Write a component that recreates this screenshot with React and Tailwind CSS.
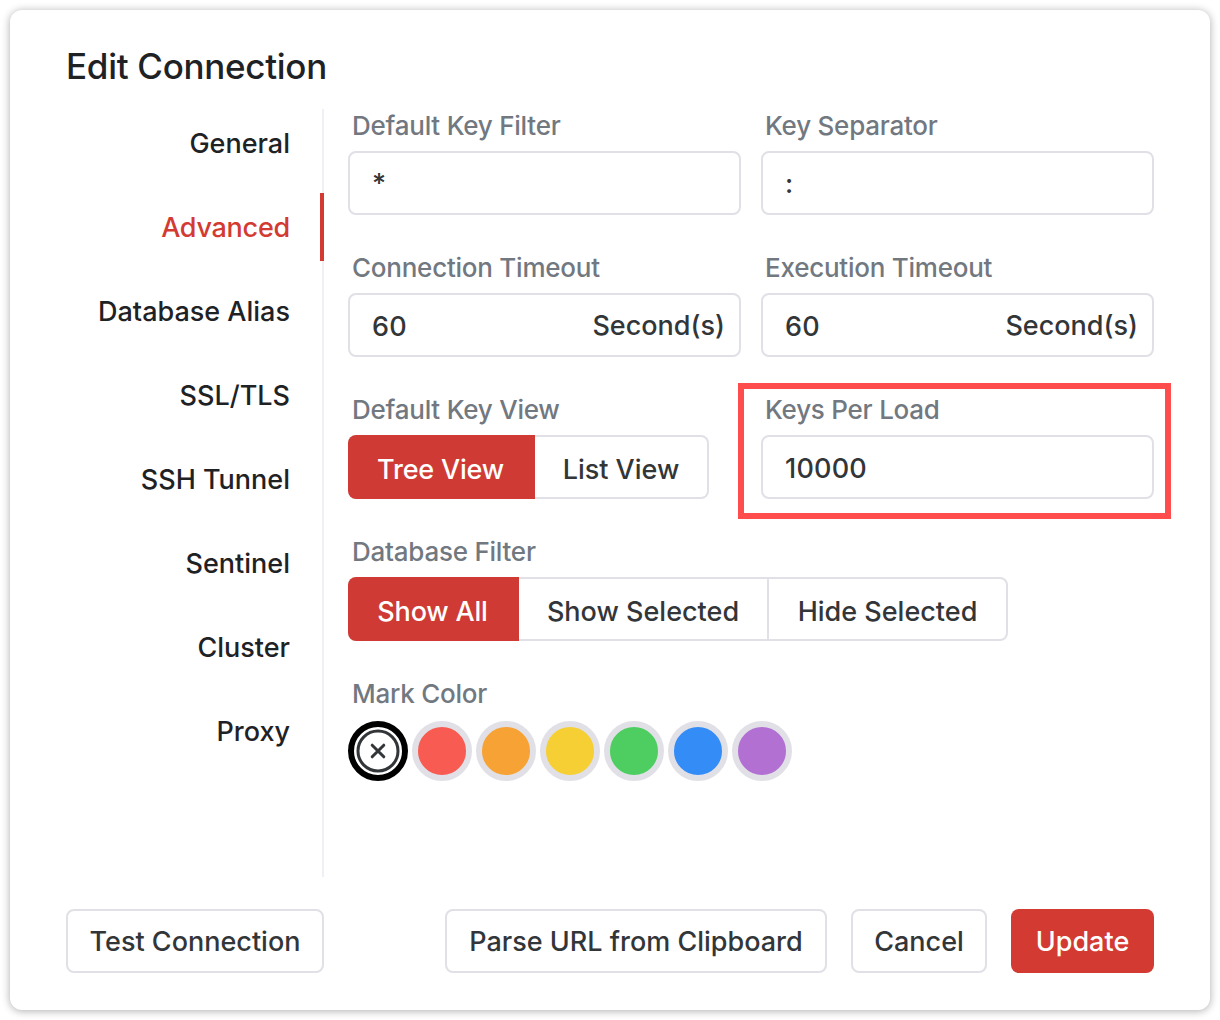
import React, { useState } from 'react';

const tabs = [
  'General',
  'Advanced',
  'Database Alias',
  'SSL/TLS',
  'SSH Tunnel',
  'Sentinel',
  'Cluster',
  'Proxy',
];

const markColors = ['#f75b52', '#f7a234', '#f5cf33', '#4ece60', '#348cf7', '#b270d3'];

const Field = ({ label, children }) => (
  <div className="h-[142px]">
    <div className="h-[51px] pl-1 text-[26px] leading-[52px] font-[450] tracking-[-0.24px] text-[#727880]">{label}</div>
    {children}
  </div>
);

const TextInput = ({ value, suffix, numeric, onChange }) => (
  <div className="flex h-16 items-center rounded-lg border-2 border-[#e0e0e6] pt-0.5 pr-[14px] pl-[22px]">
    <input
      value={value}
      onChange={(e) => onChange(e.target.value)}
      className={`min-w-0 flex-1 bg-transparent tracking-[0.2px] outline-none ${numeric ? 'pt-0.5' : ''}`}
    />
    {suffix && <span>{suffix}</span>}
  </div>
);

const RadioGroup = ({ options, widths, value, onChange }) => (
  <div className="flex h-16">
    {options.map((option, i) => (
      <button
        key={option}
        onClick={() => onChange(option)}
        className={`${widths[i]} pt-1.5 whitespace-nowrap first:rounded-l-lg last:rounded-r-lg ${
          option === value
            ? 'bg-[#cf3a34] pr-0.5 font-medium tracking-[-0.2px] text-white'
            : 'border-y-2 border-r-2 border-[#e0e0e6]'
        }`}
      >
        {option}
      </button>
    ))}
  </div>
);

const App = () => {
  const [activeTab, setActiveTab] = useState('Advanced');
  const [keyView, setKeyView] = useState('Tree View');
  const [dbFilter, setDbFilter] = useState('Show All');
  const [markColor, setMarkColor] = useState('');
  const [form, setForm] = useState({
    filter: '*',
    separator: ':',
    connTimeout: '60',
    execTimeout: '60',
    loadSize: '10000',
  });

  const update = (key) => (value) => setForm({ ...form, [key]: value });

  return (
    <div className="h-[1020px] w-[1220px] bg-white p-2.5 font-['Inter',sans-serif] text-[27px] font-[450] text-[#333639]">
      <div className="h-[1000px] rounded-xl bg-white px-14 pt-[34px] shadow-[0_1px_8px_rgba(0,0,0,0.33)]">
        <h1 className="h-[45px] text-[35px] leading-[44px] font-[550] tracking-[-0.3px] text-[#1f2225]">
          Edit Connection
        </h1>

        <div className="mt-5 flex h-[768px]">
          {/* Side tabs */}
          <div className="flex w-[258px] flex-col gap-4 border-r-2 border-[#efeff5]">
            {tabs.map((tab) => (
              <button
                key={tab}
                onClick={() => setActiveTab(tab)}
                className={`-mr-0.5 h-[68px] pt-0.5 text-right ${
                  tab === activeTab
                    ? 'border-r-4 border-[#d33a31] pr-[30px] tracking-[-0.25px] text-[#d33a31]'
                    : 'pr-[34px] text-[#1f2225]'
                }`}
              >
                {tab}
              </button>
            ))}
          </div>

          {/* Advanced settings */}
          <div className="-mt-[9px] ml-6 w-[806px]">
            <div className="grid grid-cols-2 gap-x-5">
              <Field label="Default Key Filter">
                <TextInput value={form.filter} onChange={update('filter')} />
              </Field>
              <Field label="Key Separator">
                <TextInput value={form.separator} onChange={update('separator')} />
              </Field>
              <Field label="Connection Timeout">
                <TextInput numeric value={form.connTimeout} onChange={update('connTimeout')} suffix="Second(s)" />
              </Field>
              <Field label="Execution Timeout">
                <TextInput numeric value={form.execTimeout} onChange={update('execTimeout')} suffix="Second(s)" />
              </Field>
              <Field label="Default Key View">
                <RadioGroup
                  options={['Tree View', 'List View']}
                  widths={['w-[187px]', 'w-[174px]']}
                  value={keyView}
                  onChange={setKeyView}
                />
              </Field>
              <div className="relative">
                <Field label="Keys Per Load">
                  <TextInput numeric value={form.loadSize} onChange={update('loadSize')} />
                </Field>
                <div className="pointer-events-none absolute -top-px -right-[17px] -left-[23px] h-[136px] border-[6px] border-[#ff4d4d]" />
              </div>
            </div>
            <Field label="Database Filter">
              <RadioGroup
                options={['Show All', 'Show Selected', 'Hide Selected']}
                widths={['w-[171px]', 'w-[250px]', 'w-[239px]']}
                value={dbFilter}
                onChange={setDbFilter}
              />
            </Field>
            <Field label="Mark Color">
              <div className="flex gap-1 pt-0.5">
                <button
                  onClick={() => setMarkColor('')}
                  className={`flex size-[60px] items-center justify-center rounded-full border-[6px] ${
                    markColor === '' ? 'border-black' : 'border-[#e0e0e6]'
                  }`}
                >
                  <svg viewBox="0 0 48 48" className="size-12 shrink-0" fill="none" stroke="#333639" strokeWidth="3">
                    <circle cx="24" cy="24" r="20" />
                    <path d="M18.2 18.2l11.6 11.6M29.8 18.2L18.2 29.8" strokeLinecap="round" />
                  </svg>
                </button>
                {markColors.map((color) => (
                  <button
                    key={color}
                    onClick={() => setMarkColor(color)}
                    className={`size-[60px] rounded-full border-[6px] ${
                      markColor === color ? 'border-black' : 'border-[#e0e0e6]'
                    }`}
                    style={{ backgroundColor: color }}
                  />
                ))}
              </div>
            </Field>
          </div>
        </div>

        {/* Footer */}
        <div className="mt-8 flex h-16">
          <button className="w-[258px] rounded-lg border-2 border-[#e0e0e6] pt-0.5">Test Connection</button>
          <button className="ml-auto w-[382px] rounded-lg border-2 border-[#e0e0e6] pt-0.5">
            Parse URL from Clipboard
          </button>
          <button className="ml-6 w-[136px] rounded-lg border-2 border-[#e0e0e6] pt-0.5">Cancel</button>
          <button className="ml-6 w-[143px] rounded-lg bg-[#d33a31] pt-0.5 font-medium text-white">Update</button>
        </div>
      </div>
    </div>
  );
};

export default App;
